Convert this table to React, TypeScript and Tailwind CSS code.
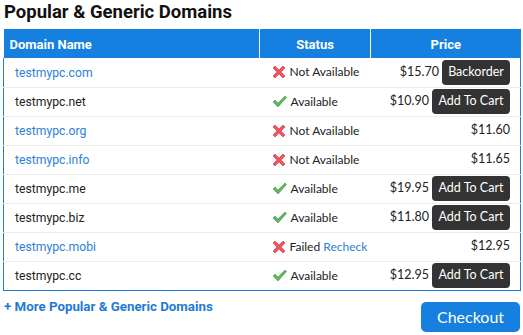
import React from "react";

type Row = {
  domain: string;
  link: boolean;
  status: "ok" | "no" | "failed";
  price: string;
  action?: "Backorder" | "Add To Cart";
};

const rows: Row[] = [
  { domain: "testmypc.com", link: true, status: "no", price: "$15.70", action: "Backorder" },
  { domain: "testmypc.net", link: false, status: "ok", price: "$10.90", action: "Add To Cart" },
  { domain: "testmypc.org", link: true, status: "no", price: "$11.60" },
  { domain: "testmypc.info", link: true, status: "no", price: "$11.65" },
  { domain: "testmypc.me", link: false, status: "ok", price: "$19.95", action: "Add To Cart" },
  { domain: "testmypc.biz", link: false, status: "ok", price: "$11.80", action: "Add To Cart" },
  { domain: "testmypc.mobi", link: true, status: "failed", price: "$12.95" },
  { domain: "testmypc.cc", link: false, status: "ok", price: "$12.95", action: "Add To Cart" },
];

const uiFont = { fontFamily: "Lato, 'Open Sans', sans-serif" };

function Cross() {
  return (
    <svg width="14" height="14" viewBox="0 0 14 14" className="shrink-0">
      <path
        d="M1 3 L3 1 L7 5 L11 1 L13 3 L9 7 L13 11 L11 13 L7 9 L3 13 L1 11 L5 7 Z"
        fill="#f0535b"
        stroke="#d8343e"
        strokeWidth="0.6"
        strokeLinejoin="round"
      />
    </svg>
  );
}

function Check() {
  return (
    <svg width="15" height="13" viewBox="0 0 15 13" className="shrink-0">
      <path
        d="M1 7 L3 5 L6 8 L13 1 L14.5 2.5 L6 12 Z"
        fill="#62b65e"
        stroke="#449a42"
        strokeWidth="0.6"
        strokeLinejoin="round"
      />
    </svg>
  );
}

export default function App() {
  return (
    <div className="w-[523px] h-[335px] bg-white overflow-hidden" style={{ fontFamily: "Roboto, 'Liberation Sans', sans-serif" }}>
      <h2 className="pl-[4px] pt-[1px] h-[29px] text-[18.5px] font-bold text-[#111] leading-[22px]">
        Popular &amp; Generic Domains
      </h2>

      <table className="ml-[3px] w-[517px] border-collapse table-fixed">
        <colgroup>
          <col className="w-[256px]" />
          <col className="w-[111px]" />
          <col className="w-[150px]" />
        </colgroup>
        <thead>
          <tr className="bg-[#1580e0] text-white text-[13px] font-bold h-[29px]">
            <th className="text-left pl-[6px] pt-[2px] border-r border-white">Domain Name</th>
            <th className="text-center border-r border-white pt-[2px]">Status</th>
            <th className="text-center pt-[2px]">Price</th>
          </tr>
        </thead>
        <tbody className="border-x border-b border-[#1a7fdc]">
          {rows.map((r, i) => (
            <tr key={r.domain} className={`h-[29px] ${i < rows.length - 1 ? "border-b border-[#ececec]" : ""}`}>
              <td className={`pl-[11px] pt-[1px] text-[12.2px] ${r.link ? "text-[#2f80da]" : "text-[#222]"}`}>{r.domain}</td>
              <td className="pl-[12px]" style={uiFont}>
                <div className="flex items-center gap-[4px] text-[12px] text-[#222] whitespace-nowrap">
                  {r.status === "ok" ? <Check /> : <Cross />}
                  {r.status === "ok" && <span>Available</span>}
                  {r.status === "no" && <span>Not Available</span>}
                  {r.status === "failed" && (
                    <span>
                      Failed <span className="text-[#2f80da]">Recheck</span>
                    </span>
                  )}
                </div>
              </td>
              <td className="pr-[10px]" style={uiFont}>
                <div className="flex items-center justify-end gap-[3px] text-[12.5px] text-[#222] whitespace-nowrap">
                  <span>{r.price}</span>
                  {r.action && (
                    <button
                      className={`h-[25px] rounded-[4px] bg-[#333] text-white text-[12.5px] ${
                        r.action === "Add To Cart" ? "w-[78px]" : "w-[68px]"
                      }`}
                    >
                      {r.action}
                    </button>
                  )}
                </div>
              </td>
            </tr>
          ))}
        </tbody>
      </table>

      <div className="flex justify-between items-start mt-[11px] pl-[4px] pr-[3px]">
        <a className="text-[13.3px] font-bold text-[#1f7ad6] leading-[16px] mt-[-3px]">+ More Popular &amp; Generic Domains</a>
        <button className="w-[99px] h-[30px] rounded-[5px] bg-[#1580e0] text-white text-[16px]" style={uiFont}>
          Checkout
        </button>
      </div>
    </div>
  );
}
